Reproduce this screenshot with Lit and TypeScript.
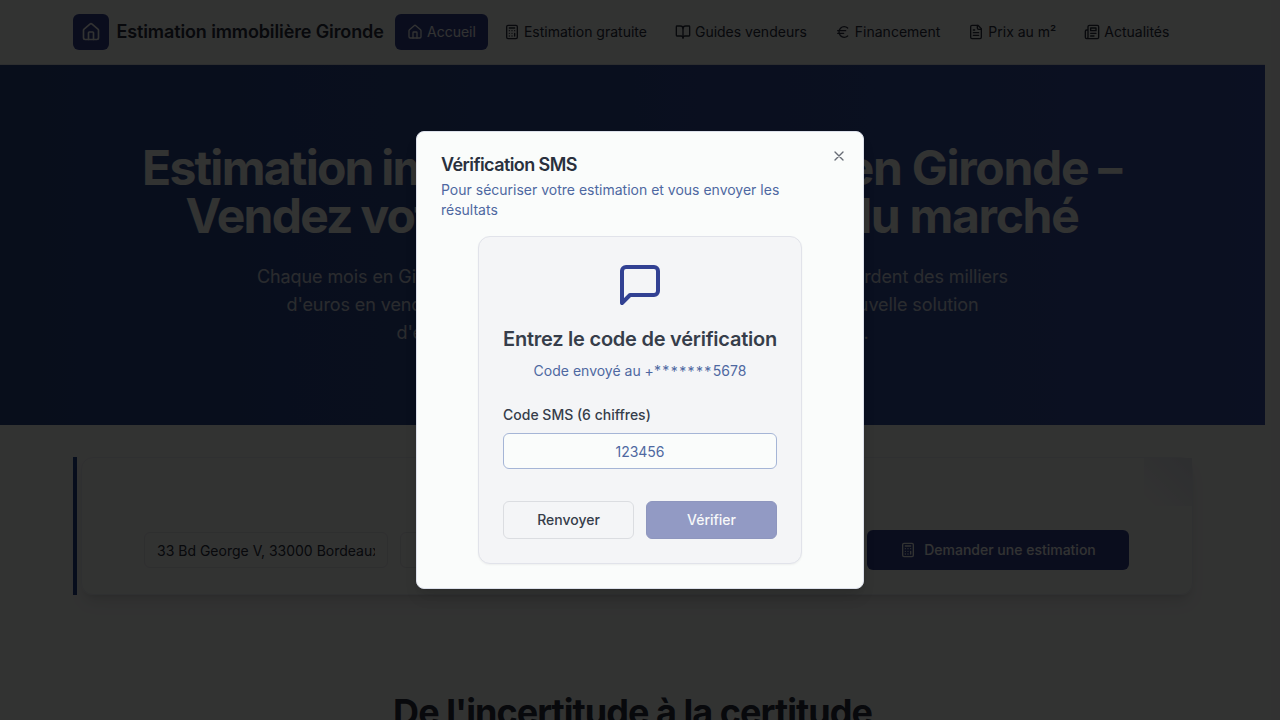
import { LitElement, html, css, svg } from "lit";
import { customElement } from "lit/decorators.js";

const ICONS: Record<string, unknown> = {
  house: svg`<path d="M15 21v-8a1 1 0 0 0-1-1h-4a1 1 0 0 0-1 1v8"/><path d="M3 10a2 2 0 0 1 .709-1.528l7-5.999a2 2 0 0 1 2.582 0l7 5.999A2 2 0 0 1 21 10v9a2 2 0 0 1-2 2H5a2 2 0 0 1-2-2z"/>`,
  calculator: svg`<rect width="16" height="20" x="4" y="2" rx="2"/><path d="M8 6h8M16 14v4M16 10h.01M12 10h.01M8 10h.01M12 14h.01M8 14h.01M12 18h.01M8 18h.01"/>`,
  book: svg`<path d="M12 7v14"/><path d="M3 18a1 1 0 0 1-1-1V4a1 1 0 0 1 1-1h5a4 4 0 0 1 4 4 4 4 0 0 1 4-4h5a1 1 0 0 1 1 1v13a1 1 0 0 1-1 1h-6a3 3 0 0 0-3 3 3 3 0 0 0-3-3z"/>`,
  euro: svg`<path d="M4 10h12M4 14h9"/><path d="M19 6a7.7 7.7 0 0 0-5.2-2A7.9 7.9 0 0 0 6 12c0 4.4 3.5 8 7.8 8 2 0 3.8-.8 5.2-2"/>`,
  file: svg`<path d="M15 2H6a2 2 0 0 0-2 2v16a2 2 0 0 0 2 2h12a2 2 0 0 0 2-2V7Z"/><path d="M14 2v4a2 2 0 0 0 2 2h4M10 9H8M16 13H8M16 17H8"/>`,
  news: svg`<path d="M4 22h16a2 2 0 0 0 2-2V4a2 2 0 0 0-2-2H8a2 2 0 0 0-2 2v16a2 2 0 0 1-2 2Zm0 0a2 2 0 0 1-2-2v-9c0-1.1.9-2 2-2h2"/><path d="M18 14h-8M15 18h-5M10 6h8v4h-8V6Z"/>`,
  message: svg`<path d="M21 15a2 2 0 0 1-2 2H7l-4 4V5a2 2 0 0 1 2-2h14a2 2 0 0 1 2 2z"/>`,
  close: svg`<path d="M18 6 6 18M6 6l12 12"/>`,
};

const icon = (name: string, size: number) => html`<svg
  width=${size} height=${size} viewBox="0 0 24 24" fill="none" stroke="currentColor"
  stroke-width="2" stroke-linecap="round" stroke-linejoin="round">${ICONS[name]}</svg>`;

const NAV = [
  ["house", "Accueil"],
  ["calculator", "Estimation gratuite"],
  ["book", "Guides vendeurs"],
  ["euro", "Financement"],
  ["file", "Prix au m²"],
  ["news", "Actualités"],
];

@customElement("site-page")
class SitePage extends LitElement {
  static styles = css`
    :host { display: block; height: 720px; overflow: hidden; background: #fafcfb; padding-right: 15px; color: #29303d; }
    * { box-sizing: border-box; }
    svg { display: block; flex: none; }
    header { height: 65px; border-bottom: 1px solid #e1e4ea; padding: 0 72.5px; display: flex; align-items: center; }
    .logo { width: 36px; height: 36px; border-radius: 6px; background: #324193; color: #fafcfb; display: grid; place-items: center; margin-right: 8px; }
    .brand { font-size: 18px; font-weight: 600; line-height: 28px; width: 278.5px; white-space: nowrap; letter-spacing: -0.12px; }
    nav { display: flex; gap: 4px; }
    .link { display: flex; align-items: center; gap: 4px; height: 36px; padding: 0 12px; border-radius: 6px; font-size: 14px; line-height: 20px; white-space: nowrap; }
    .active { background: #324193; color: #fafcfb; }
    .hero { height: 360px; background: linear-gradient(90deg, #284688, #3a53a8); padding-top: 79px; text-align: center; color: #fafcfb; }
    h1 { margin: 0; font-size: 48px; line-height: 48px; font-weight: 700; letter-spacing: -1.3px; white-space: nowrap; }
    .lead { margin: 23px 0 0; font-size: 18px; line-height: 28px; opacity: 0.8; white-space: nowrap; letter-spacing: -0.1px; }
    .line { display: flex; justify-content: space-between; margin: 0 auto; }
    .tight { letter-spacing: -1.75px; word-spacing: -1px; }
    .t1 { width: 981px; padding-right: 2px; }
    .t2 { width: 894px; padding-right: 1px; }
    .l1 { width: 751px; }
    .l2 { width: 692px; }
    .l3 { width: 472px; }
    .estimate { margin: 32px 72.5px 0; height: 138px; border-left: 4px solid #27458f; padding-left: 4px; }
    .card { height: 138px; border: 1px solid #eceff3; border-radius: 12px; box-shadow: 0 10px 15px -3px rgba(0,0,0,.1), 0 4px 6px -4px rgba(0,0,0,.1); display: grid; grid-template-columns: 1fr 48px; }
    .form { padding: 72px 0 0 62.5px; display: grid; grid-template-columns: 244px 455px 262px; gap: 12px; align-items: center; align-content: start; }
    .corner { height: 48px; background: linear-gradient(45deg, rgba(220,228,240,0) 10%, #e3e7ef 100%); }
    .field { height: 36px; border: 1px solid #e6e8ec; border-radius: 6px; font-size: 14px; line-height: 35px; }
    .address { margin: 0 12px; overflow: hidden; white-space: nowrap; }
    .cta { height: 40px; border-radius: 6px; background: #324193; color: #fafcfb; font-size: 14px; line-height: 20px; font-weight: 500; display: flex; gap: 8px; align-items: center; justify-content: center; white-space: nowrap; }
    h2 { margin: 97px 0 0; font-size: 36px; line-height: 40px; font-weight: 700; letter-spacing: -0.96px; text-align: center; white-space: nowrap; }
  `;
  render() {
    return html`
      <header>
        <div class="logo">${icon("house", 20)}</div>
        <div class="brand">Estimation immobilière Gironde</div>
        <nav>${NAV.map(([name, label], i) => html`<div class="link ${i === 0 ? "active" : ""}">${icon(name, 16)}<span>${label}</span></div>`)}</nav>
      </header>
      <section class="hero">
        <h1>
          <span class="line t1"><span class="tight">Estimation immobilière</span><span>précise en Gironde –</span></span>
          <span class="line t2"><span class="tight">Vendez votre bien</span><span>au vrai prix du marché</span></span>
        </h1>
        <p class="lead">
          <span class="line l1"><span>Chaque mois en Gironde, des propriétaires</span><span>mal conseillés perdent des milliers</span></span>
          <span class="line l2"><span>d'euros en vendant au mauvais prix.</span><span>Découvrez notre nouvelle solution</span></span>
          <span class="line l3"><span>d'estimation basée sur</span><span>les ventes réelles du marché.</span></span>
        </p>
      </section>
      <section class="estimate">
        <div class="card">
          <div class="form">
            <div class="field"><div class="address">33 Bd George V, 33000 Bordeaux</div></div>
            <div class="field"></div>
            <div class="cta">${icon("calculator", 16)}<span>Demander une estimation</span></div>
          </div>
          <div class="corner"></div>
        </div>
      </section>
      <h2>De l'incertitude à la certitude</h2>
    `;
  }
}

@customElement("sms-dialog")
class SmsDialog extends LitElement {
  static styles = css`
    :host { display: block; position: relative; width: 448px; }
    * { box-sizing: border-box; }
    svg { display: block; }
    .dialog { height: 458px; background: #fafcfb; border: 1px solid #dce0ea; border-radius: 8px; padding: 24px; box-shadow: 0 10px 15px -3px rgba(0,0,0,.1), 0 4px 6px -4px rgba(0,0,0,.1); display: flex; flex-direction: column; align-items: center; }
    .head { width: 100%; margin-bottom: 16px; }
    .close { position: absolute; top: 17px; right: 17px; color: #29303d; opacity: 0.7; }
    h2 { margin: 0 0 6px; font-size: 18px; line-height: 18px; font-weight: 600; letter-spacing: -0.58px; color: #29303d; }
    p { margin: 0; font-size: 14px; line-height: 20px; color: #4e68a1; }
    .card { width: 324px; height: 328px; background: #f4f5f7; border: 1px solid #e1e3ea; border-radius: 12px; padding: 24px; box-shadow: 0 1px 2px rgba(0,0,0,.05); color: #363d4a; }
    .glyph { color: #324193; display: grid; place-items: center; margin-bottom: 16px; }
    h3 { margin: 0 0 8px; font-size: 20px; line-height: 28px; font-weight: 600; text-align: center; white-space: nowrap; letter-spacing: -0.24px; }
    .sent { text-align: center; }
    .stars { letter-spacing: 1.4px; }
    .low { vertical-align: -1px; line-height: 1; }
    .label { margin: 24px 0 8px; font-size: 14px; line-height: 20px; font-weight: 500; }
    .input { height: 36px; border: 1px solid #a5b5d6; border-radius: 6px; background: #fafcfb; color: #4e68a1; font-size: 14px; line-height: 35px; text-align: center; }
    .actions { margin-top: 32px; display: grid; grid-template-columns: 1fr 1fr; gap: 12px; }
    .button { height: 38px; border: 1px solid #dbdde1; border-radius: 6px; font-size: 14px; line-height: 20px; font-weight: 500; display: grid; place-items: center; }
    .primary { background: #324193; border-color: #2b3a87; color: #fafcfb; opacity: 0.5; }
  `;
  render() {
    return html`
      <div class="dialog">
        <div class="head">
          <h2>Vérification SMS</h2>
          <p>Pour sécuriser votre estimation et vous envoyer les résultats</p>
        </div>
        <div class="card">
          <div class="glyph">${icon("message", 48)}</div>
          <h3>Entrez le code de vérification</h3>
          <p class="sent">Code envoyé au +<span class="stars">**<span class="low">*****</span></span>5678</p>
          <div class="label">Code SMS (6 chiffres)</div>
          <div class="input">123456</div>
          <div class="actions">
            <div class="button">Renvoyer</div>
            <div class="button primary">Vérifier</div>
          </div>
        </div>
      </div>
      <div class="close">${icon("close", 16)}</div>
    `;
  }
}

@customElement("app-root")
class AppRoot extends LitElement {
  static styles = css`
    :host { display: block; position: relative; width: 1280px; height: 720px; overflow: hidden; font-family: Inter, sans-serif; }
    .overlay { position: absolute; inset: 0; background: rgba(0, 0, 0, 0.8); display: grid; place-items: center; }
  `;
  render() {
    return html`<site-page></site-page><div class="overlay"><sms-dialog></sms-dialog></div>`;
  }
}
